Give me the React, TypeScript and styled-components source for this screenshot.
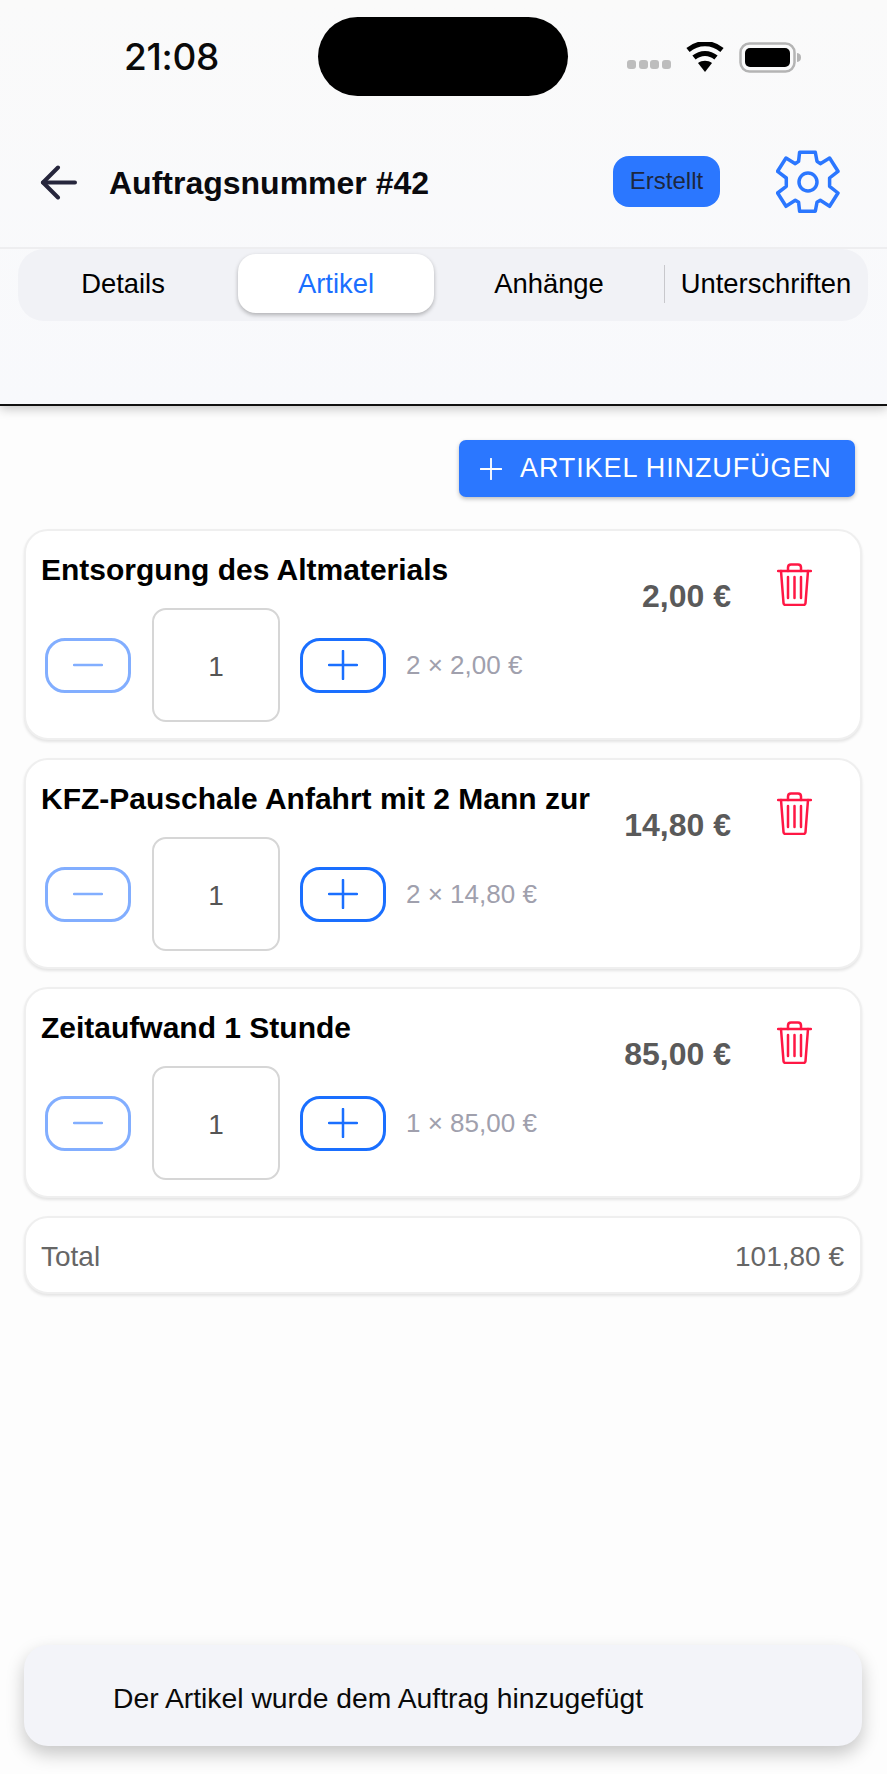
import styled, { createGlobalStyle } from "styled-components";

const BLUE = "#2b77ff";

type Article = {
  id: number;
  title: string;
  price: string;
  calc: string;
};

const ARTICLES: Article[] = [
  { id: 1, title: "Entsorgung des Altmaterials", price: "2,00 €", calc: "2 × 2,00 €" },
  { id: 2, title: "KFZ-Pauschale Anfahrt mit 2 Mann zur", price: "14,80 €", calc: "2 × 14,80 €" },
  { id: 3, title: "Zeitaufwand 1 Stunde", price: "85,00 €", calc: "1 × 85,00 €" },
];

const TABS = ["Details", "Artikel", "Anhänge", "Unterschriften"];

function WifiIcon() {
  return (
    <svg width="38" height="30" viewBox="0 0 38 30">
      <path d="M19 30l-7-9c4-3 10-3 14 0z" fill="#000" />
      <path d="M8 15.500c6.500-5.500 15.500-5.500 22 0" fill="none" stroke="#000" strokeWidth="5" />
      <path d="M2 8c10-8.500 24-8.500 34 0" fill="none" stroke="#000" strokeWidth="5" />
    </svg>
  );
}

function BatteryIcon() {
  return (
    <svg width="62" height="31" viewBox="0 0 62 31">
      <rect x="1.500" y="1.500" width="54" height="28" rx="9" fill="none" stroke="#b4b4b4" strokeWidth="2.500" />
      <rect x="6" y="6" width="45" height="19" rx="5" fill="#000" />
      <path d="M58 11c3 .5 4 2 4 4.500s-1 4-4 4.500z" fill="#b4b4b4" />
    </svg>
  );
}

function BackIcon() {
  return (
    <svg width="37" height="35" viewBox="0 0 37 35" fill="none" stroke="#26263c" strokeWidth="4" strokeLinecap="round" strokeLinejoin="round">
      <path d="M18 2.500L3 17.500l15 15" />
      <path d="M3 17.500h32" />
    </svg>
  );
}

function GearIcon() {
  return (
    <svg width="64" height="68" viewBox="0 0 64 68" fill="none" stroke={BLUE} strokeWidth="3.500" strokeLinejoin="round">
      <path d="M23.600 4.300h15.700L41 13.300l3.300 2.400L53.600 10 62 23.300 53.600 30v8.300L62 45l-8.400 13.300-9.300-6-3.300 2-1.700 9H23.600l-1-9-3.300-2-9.300 6L1.600 45l8.700-6.700V30l-8.700-6.700L10 10l9.300 5.700 3.300-2.400z" />
      <circle cx="32" cy="34" r="9" />
    </svg>
  );
}

function TrashIcon() {
  return (
    <svg width="35" height="43" viewBox="0 0 35 43" fill="none" stroke="#ff1744" strokeWidth="2.500" strokeLinecap="round" strokeLinejoin="round">
      <path d="M1 8h33" />
      <path d="M11 8V4.500C11 2.500 12 1.500 14 1.500h7c2 0 3 1 3 3V8" />
      <path d="M4 8l2.500 32c0 1 1 2 2 2h18c1 0 2-1 2-2L31 8" />
      <path d="M11 14v21M17.500 14v21M24 14v21" />
    </svg>
  );
}

function MinusIcon() {
  return (
    <svg width="30" height="4" viewBox="0 0 30 4">
      <path d="M1 2h28" stroke="#82aeff" strokeWidth="2.500" strokeLinecap="round" />
    </svg>
  );
}

function PlusIcon({ size, color }: { size: number; color: string }) {
  return (
    <svg width={size} height={size} viewBox="0 0 30 30">
      <path d="M1 15h28M15 1v28" stroke={color} strokeWidth="2.500" strokeLinecap="round" />
    </svg>
  );
}

export default function App() {
  return (
    <Page>
      <GlobalStyle />
      <Header>
        <StatusBar>
          <Clock>21:08</Clock>
          <Island />
          <StatusIcons>
            <SignalDots>
              <Dot />
              <Dot />
              <Dot />
              <Dot />
            </SignalDots>
            <WifiIcon />
            <BatteryIcon />
          </StatusIcons>
        </StatusBar>
        <TitleRow>
          <BackIcon />
          <Title>Auftragsnummer #42</Title>
          <Badge>Erstellt</Badge>
          <GearIcon />
        </TitleRow>
        <TabArea>
          <TabTrack>
            {TABS.map((tab) => (
              <Tab
                key={tab}
                $active={tab === "Artikel"}
                $split={tab === "Unterschriften"}
                $first={tab === "Details"}
              >
                {tab}
              </Tab>
            ))}
          </TabTrack>
        </TabArea>
      </Header>

      <Content>
        <AddRow>
          <AddButton>
            <PlusIcon size={22} color="#fff" />
            ARTIKEL HINZUFÜGEN
          </AddButton>
        </AddRow>

        {ARTICLES.map((article) => (
          <ArticleCard key={article.id}>
            <ArticleMain>
              <ArticleTitle>{article.title}</ArticleTitle>
              <StepperRow>
                <StepButton $faded>
                  <MinusIcon />
                </StepButton>
                <QtyBox>1</QtyBox>
                <StepButton>
                  <PlusIcon size={30} color="#1a6fff" />
                </StepButton>
                <Calc>{article.calc}</Calc>
              </StepperRow>
            </ArticleMain>
            <Price>{article.price}</Price>
            <TrashSlot>
              <TrashIcon />
            </TrashSlot>
          </ArticleCard>
        ))}

        <TotalCard>
          <span>Total</span>
          <span>101,80 €</span>
        </TotalCard>
      </Content>

      <Toast>Der Artikel wurde dem Auftrag hinzugefügt</Toast>
    </Page>
  );
}

const GlobalStyle = createGlobalStyle`
  html, body {
    margin: 0;
    padding: 0;
    background: #fdfdfd;
  }
  * {
    box-sizing: border-box;
  }
`;

const Page = styled.div`
  width: 887px;
  height: 1774px;
  display: flex;
  flex-direction: column;
  background: #fdfdfd;
  font-family: "Liberation Sans", Arial, sans-serif;
  color: #000;
`;

const Header = styled.header`
  height: 406px;
  display: flex;
  flex-direction: column;
  background: linear-gradient(#fafafa, #f8f9fc);
  border-bottom: 2px solid #111;
  box-shadow: 0 3px 10px rgba(0, 0, 0, 0.22);
`;

const StatusBar = styled.div`
  height: 97px;
  padding: 17px 0 0 124px;
  display: flex;
  align-items: flex-start;
`;

const Clock = styled.div`
  width: 194px;
  margin-top: 19px;
  font-family: Inter, sans-serif;
  font-size: 37px;
  font-weight: 500;
  line-height: 42px;
  letter-spacing: -0.3px;
  color: #0a0a0a;
`;

const Island = styled.div`
  width: 250px;
  height: 79px;
  border-radius: 40px;
  background: #000;
`;

const StatusIcons = styled.div`
  margin: 25px 0 0 59px;
  display: flex;
  align-items: flex-start;
  gap: 15px;
`;

const SignalDots = styled.div`
  margin-top: 18px;
  display: flex;
  gap: 2.500px;
`;

const Dot = styled.span`
  width: 9px;
  height: 9px;
  border-radius: 3px;
  background: #bdbdbd;
`;

const TitleRow = styled.div`
  height: 152px;
  padding: 20px 47px 0 40px;
  display: flex;
  align-items: center;
  border-bottom: 2px solid #eeeef0;
`;

const Title = styled.h1`
  flex: 1;
  margin: 2px 0 0 32px;
  font-size: 32px;
  font-weight: 700;
  color: #0a0a0e;
`;

const Badge = styled.div`
  width: 107px;
  height: 51px;
  margin: 0 56px 2px 0;
  border-radius: 16px;
  display: flex;
  align-items: center;
  justify-content: center;
  background: ${BLUE};
  color: #1c2740;
  font-size: 24px;
`;

const TabArea = styled.div`
  flex: 1;
  padding: 0 19px 0 18px;
`;

const TabTrack = styled.div`
  height: 72px;
  padding: 5px 0 8px;
  display: grid;
  grid-template-columns: 220px 196px 230px 204px;
  border-radius: 26px;
  background: #f1f2f6;
`;

const Tab = styled.div<{ $active?: boolean; $split?: boolean; $first?: boolean }>`
  position: relative;
  display: flex;
  align-items: center;
  justify-content: center;
  padding-right: ${(p) => (p.$first ? "10px" : "0")};
  border-radius: 18px;
  font-size: 27.4px;
  color: ${(p) => (p.$active ? "#1a6fff" : "#000")};
  background: ${(p) => (p.$active ? "#fff" : "transparent")};
  box-shadow: ${(p) => (p.$active ? "0 2px 4px rgba(0, 0, 0, 0.28)" : "none")};

  ${(p) =>
    p.$split &&
    `
    &::before {
      content: "";
      position: absolute;
      left: 0;
      top: 11px;
      bottom: 10px;
      width: 1px;
      background: #c8c8cc;
    }
  `}
`;

const Content = styled.main`
  padding: 34px 25px 0 24px;
  display: flex;
  flex-direction: column;
  gap: 18px;
`;

const AddRow = styled.div`
  margin-bottom: 14px;
  padding-right: 7px;
  display: flex;
  justify-content: flex-end;
`;

const AddButton = styled.button`
  width: 396px;
  height: 57px;
  padding: 0 0 0 21px;
  display: flex;
  align-items: center;
  gap: 18px;
  border: 0;
  border-radius: 7px;
  background: ${BLUE};
  color: #fff;
  font-family: inherit;
  font-size: 27px;
  letter-spacing: 0.9px;
  box-shadow: 0 2px 4px rgba(0, 0, 0, 0.25);
`;

const CardBase = styled.section`
  background: #fff;
  border: 2px solid #efefef;
  border-radius: 24px;
  box-shadow: 0 2px 3px rgba(0, 0, 0, 0.1);
`;

const ArticleCard = styled(CardBase)`
  height: 211px;
  padding: 0 0 0 15px;
  display: flex;
  align-items: flex-start;
`;

const ArticleMain = styled.div`
  flex: 1;
  min-width: 0;
`;

const ArticleTitle = styled.div`
  margin-top: 21px;
  font-size: 30px;
  font-weight: 700;
  line-height: 36px;
`;

const StepperRow = styled.div`
  margin: 20px 0 0 4px;
  display: flex;
  align-items: center;
`;

const StepButton = styled.div<{ $faded?: boolean }>`
  width: 86px;
  height: 55px;
  display: flex;
  align-items: center;
  justify-content: center;
  border: 3px solid ${(p) => (p.$faded ? "#82aeff" : "#1a6fff")};
  border-radius: 20px;
`;

const QtyBox = styled.div`
  width: 128px;
  height: 114px;
  margin: 0 20px 0 21px;
  padding-top: 3px;
  display: flex;
  align-items: center;
  justify-content: center;
  border: 2px solid #d6d6d6;
  border-radius: 14px;
  color: #555;
  font-size: 28px;
`;

const Calc = styled.div`
  margin-left: 20px;
  color: #a0a0ad;
  font-size: 26px;
`;

const Price = styled.div`
  margin-top: 47px;
  color: #5a5a5a;
  font-size: 32px;
  font-weight: 700;
`;

const TrashSlot = styled.div`
  width: 129px;
  margin-top: 32px;
  padding-left: 46px;
`;

const TotalCard = styled(CardBase)`
  height: 78px;
  padding: 3px 16px 0 15px;
  display: flex;
  align-items: center;
  justify-content: space-between;
  color: #666;
  font-size: 28px;
`;

const Toast = styled.div`
  height: 101px;
  margin: auto 25px 28px 24px;
  padding: 5px 0 0 89px;
  display: flex;
  align-items: center;
  background: #f3f4f9;
  border-radius: 24px;
  box-shadow: 0 8px 18px rgba(0, 0, 0, 0.22);
  color: #0a0a0a;
  font-size: 28.3px;
`;
